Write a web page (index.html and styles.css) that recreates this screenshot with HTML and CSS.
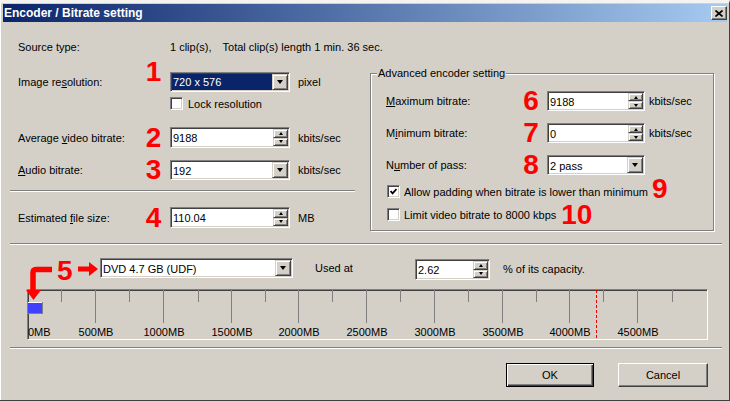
FILE: index.html
```html
<!DOCTYPE html>
<html lang="en">
<head>
    <meta charset="UTF-8">
    <title>Encoder / Bitrate setting</title>
    <link rel="stylesheet" href="styles.css">
</head>
<body>
    <div class="window">
        <div class="titlebar">
            <span class="title">Encoder / Bitrate setting</span>
            <button class="close">
                <svg width="8" height="7" viewBox="0 0 8 7"><path d="M0.5 0.5 L7.5 6.5 M7.5 0.5 L0.5 6.5" stroke="#000" stroke-width="1.7" fill="none"/></svg>
            </button>
        </div>

        <div class="content">
            <div class="source-row">
                <span class="source-label">Source type:</span>
                <span>1 clip(s),</span>
                <span class="clip-total">Total clip(s) length 1 min. 36 sec.</span>
            </div>

            <div class="top">
                <div class="left-col">
                    <div class="row">
                        <label>Image re<u>s</u>olution:</label>
                        <span class="num up">1</span>
                        <div class="field combo">
                            <span class="field-text selected">720 x 576</span>
                            <span class="drop"><i class="arrow-down"></i></span>
                        </div>
                        <span class="unit">pixel</span>
                    </div>
                    <div class="check-row lock">
                        <span class="checkbox"></span>
                        <span>Lock resolution</span>
                    </div>
                    <div class="row tall avg">
                        <label>Average <u>v</u>ideo bitrate:</label>
                        <span class="num">2</span>
                        <div class="field">
                            <span class="field-text">9188</span>
                            <span class="spin"><span class="spin-btn"><i class="tri-up"></i></span><span class="spin-btn"><i class="tri-down"></i></span></span>
                        </div>
                        <span class="unit">kbits/sec</span>
                    </div>
                    <div class="row audio">
                        <label><u>A</u>udio bitrate:</label>
                        <span class="num">3</span>
                        <div class="field combo">
                            <span class="field-text">192</span>
                            <span class="drop"><i class="arrow-down"></i></span>
                        </div>
                        <span class="unit">kbits/sec</span>
                    </div>
                    <div class="sep sep-short"></div>
                    <div class="row tall est">
                        <label>Estimated <u>f</u>ile size:</label>
                        <span class="num">4</span>
                        <div class="field">
                            <span class="field-text">110.04</span>
                            <span class="spin"><span class="spin-btn"><i class="tri-up"></i></span><span class="spin-btn"><i class="tri-down"></i></span></span>
                        </div>
                        <span class="unit">MB</span>
                    </div>
                </div>

                <div class="group">
                    <span class="legend">Advanced encoder setting</span>
                    <div class="grow">
                        <label><u>M</u>aximum bitrate:</label>
                        <span class="num">6</span>
                        <div class="field">
                            <span class="field-text">9188</span>
                            <span class="spin"><span class="spin-btn"><i class="tri-up"></i></span><span class="spin-btn"><i class="tri-down"></i></span></span>
                        </div>
                        <span class="unit">kbits/sec</span>
                    </div>
                    <div class="grow spaced">
                        <label>M<u>i</u>nimum bitrate:</label>
                        <span class="num">7</span>
                        <div class="field">
                            <span class="field-text">0</span>
                            <span class="spin"><span class="spin-btn"><i class="tri-up"></i></span><span class="spin-btn"><i class="tri-down"></i></span></span>
                        </div>
                        <span class="unit">kbits/sec</span>
                    </div>
                    <div class="grow spaced">
                        <label>N<u>u</u>mber of pass:</label>
                        <span class="num">8</span>
                        <div class="field combo">
                            <span class="field-text">2 pass</span>
                            <span class="drop"><i class="arrow-down"></i></span>
                        </div>
                        <span></span>
                    </div>
                    <div class="check-row opt">
                        <span class="checkbox">
                            <svg width="7" height="7" viewBox="0 0 7 7"><path d="M0.5 3 L2.6 5.4 L6.5 1" stroke="#000" stroke-width="1.8" fill="none"/></svg>
                        </span>
                        <span>Allow padding when bitrate is lower than minimum</span>
                        <span class="num inline nine">9</span>
                    </div>
                    <div class="check-row opt">
                        <span class="checkbox"></span>
                        <span>Limit video bitrate to 8000 kbps</span>
                        <span class="num inline ten">10</span>
                    </div>
                </div>
            </div>

            <div class="sep sep-long"></div>

            <div class="media">
                <svg class="arrows" width="76" height="42" viewBox="0 0 76 42">
                    <path d="M26 9.5 H10 Q7 9.5 7 13 V31" stroke="#f00" stroke-width="5.5" fill="none"/>
                    <polygon points="0,30 15,30 7.5,40" fill="#f00"/>
                    <path d="M52 9 H64" stroke="#f00" stroke-width="5" fill="none"/>
                    <polygon points="63,2 72,9 63,16" fill="#f00"/>
                </svg>
                <div class="media-row">
                    <span class="num five">5</span>
                    <div class="field combo disc">
                        <span class="field-text">DVD 4.7 GB (UDF)</span>
                        <span class="drop"><i class="arrow-down"></i></span>
                    </div>
                    <span class="used">Used at</span>
                    <div class="field percent">
                        <span class="field-text">2.62</span>
                        <span class="spin"><span class="spin-btn"><i class="tri-up"></i></span><span class="spin-btn"><i class="tri-down"></i></span></span>
                    </div>
                    <span class="capacity">% of its capacity.</span>
                </div>

                <div class="ruler">
                    <svg width="679" height="49" viewBox="0 0 679 49">
                        <g stroke="#808080" stroke-width="1">
                            <path d="M67.5 0 V33 M135.5 0 V33 M203.5 0 V33 M270.5 0 V33 M338.5 0 V33 M406.5 0 V33 M474.5 0 V33 M541.5 0 V33 M609.5 0 V33"/>
                            <path d="M33.5 0 V12 M101.5 0 V12 M170.5 0 V12 M237.5 0 V12 M304.5 0 V12 M372.5 0 V12 M440.5 0 V12 M508.5 0 V12 M575.5 0 V12 M644.5 0 V12"/>
                        </g>
                        <rect x="0" y="12" width="15" height="12" fill="#4040ff"/>
                        <path d="M0 12.5 H14" stroke="#fff"/>
                        <path d="M14.5 12 V24 M0 23.5 H15" stroke="#808080"/>
                        <path d="M568.5 0 V48" stroke="#e00" stroke-dasharray="3 2"/>
                        <g class="ruler-text">
                            <text x="0" y="46">0MB</text>
                            <text x="68" y="46" text-anchor="middle">500MB</text>
                            <text x="136" y="46" text-anchor="middle">1000MB</text>
                            <text x="204" y="46" text-anchor="middle">1500MB</text>
                            <text x="271" y="46" text-anchor="middle">2000MB</text>
                            <text x="339" y="46" text-anchor="middle">2500MB</text>
                            <text x="407" y="46" text-anchor="middle">3000MB</text>
                            <text x="475" y="46" text-anchor="middle">3500MB</text>
                            <text x="542" y="46" text-anchor="middle">4000MB</text>
                            <text x="610" y="46" text-anchor="middle">4500MB</text>
                        </g>
                    </svg>
                </div>
            </div>

            <div class="sep sep-long bottom"></div>

            <div class="buttons">
                <button class="btn default">OK</button>
                <button class="btn cancel">Cancel</button>
            </div>
        </div>
    </div>
</body>
</html>
```

FILE: styles.css
```css
* {
    box-sizing: border-box;
}

body {
    margin: 0;
    background: #f4f3ef;
    font-family: "Liberation Sans", Arial, sans-serif;
    font-size: 11px;
    color: #000;
}

.window {
    width: 730px;
    height: 401px;
    background: #d4d0c8;
    border-top: 3px solid #f4f3ef;
    border-right: 1px solid #404040;
    border-bottom: 1px solid #404040;
    padding: 1px 2px 0 3px;
    box-shadow: inset 1px 0 #fff;
    overflow: hidden;
}

.titlebar {
    height: 18px;
    display: flex;
    align-items: center;
    justify-content: space-between;
    padding-left: 1px;
    background: linear-gradient(to right, #0a246a, #a6caf0);
}

.title {
    color: #fff;
    font-weight: bold;
    font-size: 12px;
}

.close {
    width: 16px;
    height: 14px;
    padding: 0;
    display: flex;
    align-items: center;
    justify-content: center;
    background: #d4d0c8;
    border: 1px solid;
    border-color: #fff #404040 #404040 #fff;
    box-shadow: inset -1px -1px #808080;
}

.content {
    padding: 0 5px 0 7px;
}

.source-row {
    display: flex;
    margin-top: 18px;
    height: 14px;
    line-height: 14px;
    padding-left: 8px;
}

.source-label {
    width: 152px;
}

.clip-total {
    margin-left: 11px;
}

.top {
    display: flex;
    align-items: flex-start;
    margin-top: 18px;
    height: 160px;
}

.left-col {
    width: 345px;
}

.row {
    display: grid;
    grid-template-columns: 124px 28px 120px auto;
    align-items: center;
    height: 20px;
    padding-left: 8px;
}

.row.tall {
    height: 21px;
}

.avg {
    margin-top: 17px;
}

.audio {
    margin-top: 12px;
}

.est {
    margin-top: 15px;
}

.unit {
    margin-left: 8px;
}

.num {
    color: #f00;
    font-weight: bold;
    font-size: 28px;
    line-height: 20px;
    text-align: center;
    padding-right: 5px;
}

.num.up {
    margin-top: -20px;
}

/* fields */
.field {
    display: flex;
    height: 100%;
    padding: 1px;
    background: #fff;
    border: 1px solid;
    border-color: #808080 #fff #fff #808080;
    box-shadow: inset 1px 1px #404040, inset -1px -1px #d4d0c8;
}

.field-text {
    flex: 1;
    display: flex;
    align-items: center;
    padding-left: 1px;
    margin-top: 1px;
    white-space: nowrap;
}

.field-text.selected {
    background: #0a246a;
    color: #fff;
    margin: 0;
}

.drop,
.spin-btn {
    display: flex;
    align-items: center;
    justify-content: center;
    background: #d4d0c8;
    border: 1px solid;
    border-color: #d4d0c8 #404040 #404040 #d4d0c8;
    box-shadow: inset 1px 1px #fff, inset -1px -1px #808080;
}

.drop {
    width: 16px;
}

.spin {
    width: 15px;
    display: flex;
    flex-direction: column;
}

.spin-btn {
    flex: 1;
}

.arrow-down {
    border-left: 3.5px solid transparent;
    border-right: 3.5px solid transparent;
    border-top: 4px solid #000;
}

.tri-up {
    border-left: 2.5px solid transparent;
    border-right: 2.5px solid transparent;
    border-bottom: 3px solid #000;
}

.tri-down {
    border-left: 2.5px solid transparent;
    border-right: 2.5px solid transparent;
    border-top: 3px solid #000;
}

/* checkboxes */
.check-row {
    display: flex;
    align-items: center;
    height: 13px;
    white-space: nowrap;
}

.checkbox {
    width: 13px;
    height: 13px;
    flex-shrink: 0;
    display: flex;
    align-items: center;
    justify-content: center;
    background: #fff;
    border: 1px solid;
    border-color: #808080 #fff #fff #808080;
    box-shadow: inset 1px 1px #404040, inset -1px -1px #d4d0c8;
}

.lock {
    margin: 5px 0 0 160px;
    gap: 5px;
}

.sep {
    height: 2px;
    border-top: 1px solid #808080;
    border-bottom: 1px solid #fff;
}

.sep-short {
    margin-top: 10px;
    width: 345px;
}

.sep-long {
    margin-top: 11px;
    width: 712px;
}

.sep-long.bottom {
    margin-top: 7px;
}

/* advanced group */
.group {
    position: relative;
    width: 344px;
    height: 158px;
    margin: 1px 0 0 15px;
    padding: 17px 0 0 15px;
    border: 1px solid #808080;
    box-shadow: inset 1px 1px #fff, 1px 1px #fff;
}

.legend {
    position: absolute;
    top: -8px;
    left: 6px;
    padding: 0 1px;
    line-height: 14px;
    background: #d4d0c8;
}

.grow {
    display: grid;
    grid-template-columns: 132px 29px 98px auto;
    align-items: center;
    height: 20px;
}

.grow .num {
    padding-right: 3px;
}

.grow .unit {
    margin-left: 4px;
}

.grow.spaced {
    margin-top: 12px;
}

.opt {
    margin: 10px 0 0 1px;
    gap: 4px;
}

.num.inline {
    padding: 0;
    line-height: 22px;
}

.nine {
    margin: 0 0 6px 0;
}

.ten {
    margin-left: 1px;
}

/* media + ruler */
.media {
    position: relative;
    padding-top: 13px;
}

.arrows {
    position: absolute;
    left: 16px;
    top: 15px;
    z-index: 1;
}

.media-row {
    display: flex;
    align-items: flex-start;
    height: 22px;
}

.num.five {
    width: 43px;
    margin-left: 47px;
    line-height: 26px;
    text-align: left;
    padding: 0;
}

.disc {
    width: 193px;
    height: 20px;
}

.used {
    width: 100px;
    margin-left: 22px;
    line-height: 20px;
}

.percent {
    width: 75px;
    height: 21px;
    margin-top: 1px;
}

.capacity {
    margin-left: 13px;
    line-height: 22px;
}

.ruler {
    width: 681px;
    height: 51px;
    margin: 9px 0 0 17px;
    border: 1px solid;
    border-color: #808080 #fff #fff #808080;
    box-shadow: inset 1px 1px #404040;
}

.ruler svg {
    display: block;
}

.ruler-text {
    font-family: "Liberation Sans", Arial, sans-serif;
    font-size: 11px;
    fill: #000;
}

/* buttons */
.buttons {
    display: flex;
    justify-content: flex-end;
    gap: 24px;
    margin-top: 14px;
    padding-right: 14px;
}

.btn {
    height: 24px;
    padding: 0;
    font-family: "Liberation Sans", Arial, sans-serif;
    font-size: 11px;
    color: #000;
    background: #d4d0c8;
    border: 1px solid;
    border-color: #fff #404040 #404040 #fff;
    box-shadow: inset -1px -1px #808080;
}

.btn.default {
    width: 88px;
    border-color: #000;
    box-shadow: inset 1px 1px #fff, inset -1px -1px #404040, inset -2px -2px #808080;
}

.btn.cancel {
    width: 90px;
}
```
